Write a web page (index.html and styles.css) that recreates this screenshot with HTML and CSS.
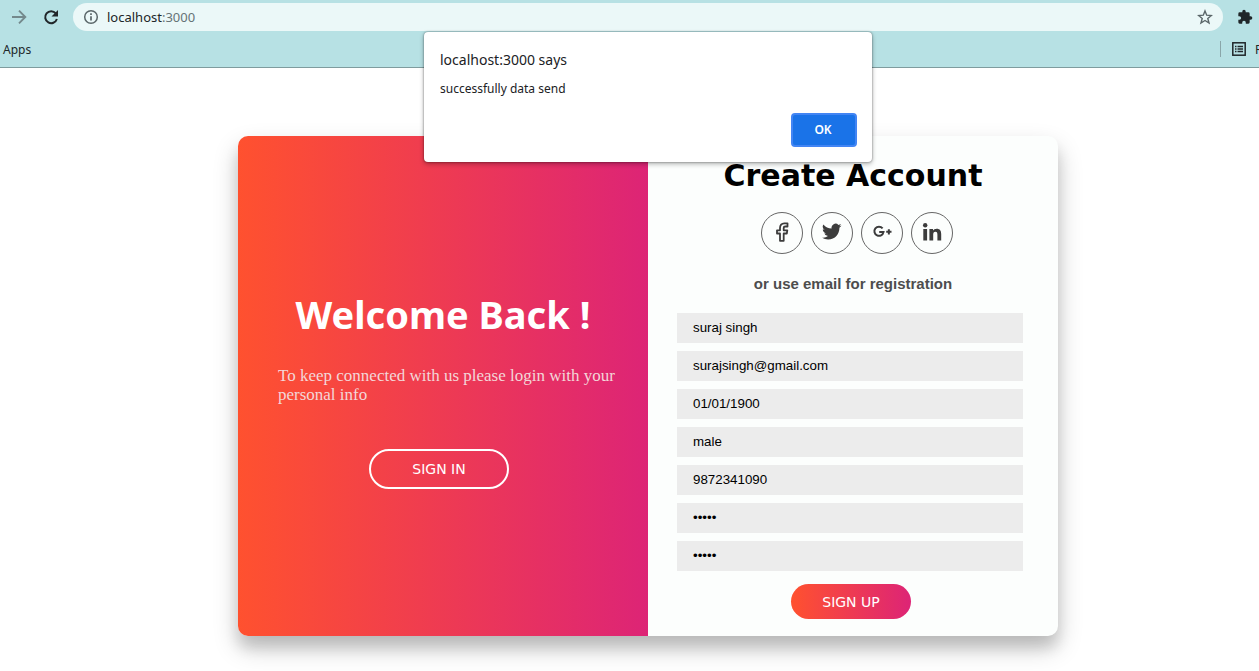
FILE: index.html
```html
<!DOCTYPE html>
<html lang="en">
<head>
<meta charset="utf-8">
<title>Create Account</title>
<link rel="stylesheet" href="styles.css">
</head>
<body>
<header class="chrome">
  <div class="toolbar">
    <button class="tool tool-muted" type="button" aria-label="Forward">
      <svg viewBox="0 0 16 16" width="16" height="16" fill="none" stroke="currentColor" stroke-width="1.9"><path d="M1 8h13M8 1.700l6.300 6.300L8 14.300"/></svg>
    </button>
    <button class="tool" type="button" aria-label="Reload">
      <svg viewBox="0 0 16 16" width="16" height="16"><path d="M12.800 4.300A6 6 0 1 0 13.900 10" fill="none" stroke="currentColor" stroke-width="2"/><path d="M15 1v6.500H8.500z" fill="currentColor"/></svg>
    </button>
    <div class="omnibox">
      <svg viewBox="0 0 16 16" width="16" height="16" fill="none" stroke="#5a6669" stroke-width="1.500"><circle cx="8" cy="8" r="6.300"/><path d="M8 7.200v4.300M8 4.300v1.700" stroke-width="1.700"/></svg>
      <span class="url">localhost<span class="port">:3000</span></span>
      <button class="star" type="button" aria-label="Bookmark this page">
        <svg viewBox="0 0 16 16" width="16" height="16" fill="none" stroke="currentColor" stroke-width="1.400"><path d="M8 1.900l1.700 4.300 4.700.3-3.600 3 1.200 4.500L8 11.500 4 14l1.200-4.500-3.600-3 4.700-.3z"/></svg>
      </button>
    </div>
    <button class="tool" type="button" aria-label="Extensions">
      <svg viewBox="0 0 24 24" width="16" height="16" fill="currentColor"><path d="M20.500 11H19V7a2 2 0 0 0-2-2h-4V3.500a2.500 2.500 0 0 0-5 0V5H4a2 2 0 0 0-2 2v3.800h1.500a2.700 2.700 0 0 1 0 5.400H2V20a2 2 0 0 0 2 2h3.800v-1.500a2.700 2.700 0 0 1 5.400 0V22H17a2 2 0 0 0 2-2v-4h1.500a2.500 2.500 0 0 0 0-5z"/></svg>
    </button>
  </div>
  <nav class="bookmarks" aria-label="Bookmarks">
    <a class="bookmark" href="#">Apps</a>
    <a class="bookmark reading" href="#">
      <svg viewBox="0 0 14 14" width="14" height="14" fill="none" stroke="currentColor" stroke-width="1.500"><rect x=".8" y=".8" width="12.400" height="12.400"/><path d="M3 4.500h1.500M5.500 4.500H11M3 7h1.500M5.500 7H11M3 9.500h1.500M5.500 9.500H11" stroke-width="1.400"/></svg>
      <span>Reading list</span>
    </a>
  </nav>
</header>

<dialog class="alert" open aria-labelledby="alert-title">
  <h2 class="alert-title" id="alert-title">localhost:3000 says</h2>
  <p class="alert-text">successfully data send</p>
  <form class="alert-actions" method="dialog"><button class="alert-ok">OK</button></form>
</dialog>

<main class="page">
  <div class="card">
    <section class="welcome">
      <h1 class="welcome-title">Welcome Back !</h1>
      <p class="welcome-text">To keep connected with us please login with your personal info</p>
      <button class="signin" type="button">SIGN IN</button>
    </section>
    <section class="account">
      <h2 class="account-title">Create Account</h2>
      <div class="socials">
        <a class="social" href="#" aria-label="Facebook">
          <svg viewBox="0 0 20 20" width="20" height="20" fill="none" stroke="currentColor" stroke-width="1.800" stroke-linejoin="round"><path d="M8 18.800V11.500H5V8.300h3V6C8 3 9.500 1.300 12.300 1.300h3.200v3.200h-2.300c-1 0-1.500.5-1.500 1.500v2.300h3.600l-.5 3.200h-3.100v7.300z"/></svg>
        </a>
        <a class="social" href="#" aria-label="Twitter">
          <svg viewBox="2 3 21 19" width="20" height="18" fill="currentColor"><path d="M22.500 5.700a8 8 0 0 1-2.400.7 4.200 4.200 0 0 0 1.800-2.300 8 8 0 0 1-2.600 1 4.200 4.200 0 0 0-7.200 3.800A12 12 0 0 1 3.400 4.500a4.200 4.200 0 0 0 1.300 5.600 4 4 0 0 1-1.900-.5 4.200 4.200 0 0 0 3.400 4.200 4 4 0 0 1-1.900.1 4.200 4.200 0 0 0 3.900 2.900A8.400 8.400 0 0 1 2 18.500a12 12 0 0 0 6.400 1.900c7.800 0 12.200-6.500 11.900-12.500a8.500 8.500 0 0 0 2.200-2.200z"/></svg>
        </a>
        <a class="social" href="#" aria-label="Google Plus">
          <svg viewBox="0 0 20 20" width="20" height="20" fill="none" stroke="currentColor" stroke-width="2"><path d="M10.600 6.400A4.600 4.600 0 1 0 11.500 10.100H7.200M14.200 9.800h5.300M16.850 7.200v5.300"/></svg>
        </a>
        <a class="social" href="#" aria-label="LinkedIn">
          <svg viewBox="0 0 20 20" width="20" height="20" fill="currentColor"><circle cx="3.200" cy="3.200" r="2.200"/><path d="M1.300 7h3.800v11.500H1.300zM7.400 7H11v1.600c.6-1.100 1.900-1.900 3.700-1.900 3.400 0 4.500 2.100 4.500 5.300v6.500h-3.800v-5.800c0-1.700-.3-2.900-2-2.900s-2.200 1.200-2.200 2.800v5.900H7.400z"/></svg>
        </a>
      </div>
      <p class="hint">or use email for registration</p>
      <form class="fields">
        <input class="field" type="text" aria-label="Name" value="suraj singh">
        <input class="field" type="email" aria-label="Email" value="surajsingh@gmail.com">
        <input class="field" type="text" aria-label="Date of birth" value="01/01/1900">
        <input class="field" type="text" aria-label="Gender" value="male">
        <input class="field" type="tel" aria-label="Phone" value="9872341090">
        <input class="field" type="password" aria-label="Password" value="12345">
        <input class="field" type="password" aria-label="Confirm password" value="12345">
        <button class="signup" type="button">SIGN UP</button>
      </form>
    </section>
  </div>
</main>
</body>
</html>
```
FILE: styles.css
```css
* { box-sizing: border-box; }

body {
  margin: 0;
  background: #fff;
  color: #000;
  font-family: "Liberation Sans", sans-serif;
}

h1, h2, p { margin: 0; }
button { font: inherit; cursor: pointer; }
svg { display: block; flex: none; }

/* Browser bars */
.chrome {
  height: 68px;
  overflow: hidden;
  background: #b7e1e4;
  border-bottom: 1px solid #7f9c9e;
  color: #202629;
  font-family: "Noto Sans", sans-serif;
}

.toolbar {
  display: flex;
  align-items: center;
  gap: 14px;
  height: 34px;
  padding: 0 6px 0 11px;
}

.tool, .star {
  display: flex;
  padding: 0;
  border: 0;
  background: none;
  color: #202629;
}
.tool + .tool { margin-left: 2px; }
.toolbar .tool-muted { color: #74898c; }
.star { margin-left: auto; color: #5a6669; }

.omnibox {
  flex: 1;
  display: flex;
  align-items: center;
  gap: 8px;
  height: 28px;
  padding: 0 10px;
  border-radius: 14px;
  background: #ebf8f8;
  font-size: 13px;
}
.port { color: #667376; }

.bookmarks {
  display: flex;
  justify-content: space-between;
  height: 30px;
  align-items: center;
  padding-left: 3px;
}
.bookmark {
  color: inherit;
  font-size: 12px;
  text-decoration: none;
}
.reading {
  display: flex;
  align-items: center;
  gap: 9px;
  width: 39px;
  height: 16px;
  padding-left: 11px;
  border-left: 1px solid #8aa6a9;
  white-space: nowrap;
}

/* Alert */
.alert {
  position: absolute;
  z-index: 1;
  top: 32px;
  left: 37px;
  right: 0;
  width: 448px;
  margin: 0 auto;
  padding: 18px 15px 15px 16px;
  border: 0;
  border-radius: 4px;
  background: #fff;
  color: #202124;
  font-family: "Noto Sans", sans-serif;
  box-shadow: 0 0 2px rgba(0, 0, 0, .5), 0 2px 5px rgba(0, 0, 0, .3);
}
.alert-title {
  font-size: 14px;
  font-weight: 400;
  line-height: 20px;
}
.alert-text {
  margin-top: 9px;
  font-size: 12px;
  line-height: 20px;
}
.alert-actions {
  display: flex;
  justify-content: flex-end;
  margin-top: 14px;
}
.alert-ok {
  width: 66px;
  height: 34px;
  padding: 0 2px 2px 0;
  border: 2px solid #4285f4;
  border-radius: 4px;
  background: #1a73e8;
  color: #fff;
  font-size: 12px;
  font-weight: 600;
}

/* Card */
.page {
  display: flex;
  justify-content: center;
  padding: 68px 0 35px 37px;
}
.card {
  display: grid;
  grid-template-columns: 1fr 1fr;
  width: 820px;
  min-height: 500px;
  border-radius: 10px;
  overflow: hidden;
  background: #fcfefd;
  box-shadow: 0 12px 26px rgba(0, 0, 0, .2), 0 12px 14px rgba(0, 0, 0, .12);
}

.welcome {
  display: flex;
  flex-direction: column;
  align-items: center;
  justify-content: center;
  padding: 4px 8px 0 0;
  background: linear-gradient(to right, #ff512f, #dd2476);
  color: #fff;
}
.welcome-title {
  margin-left: 8px;
  font: 700 38px/52px "Noto Sans", sans-serif;
}
.welcome-text {
  align-self: stretch;
  margin: 26px 0 45px;
  padding-left: 40px;
  color: #f3d6d8;
  font: 17px/19px "Liberation Serif", serif;
}
.signin {
  width: 140px;
  height: 40px;
  border: 2px solid #fff;
  border-radius: 20px;
  background: none;
  color: #fff;
  font: 14px "DejaVu Sans", sans-serif;
}

.account {
  padding: 22px 35px 17px 29px;
  text-align: center;
}
.account-title {
  margin-left: 6px;
  font: 700 30px/36px "DejaVu Sans", sans-serif;
  white-space: nowrap;
}
.socials {
  display: flex;
  justify-content: center;
  gap: 8px;
  margin-top: 18px;
  padding-left: 14px;
}
.social {
  display: flex;
  align-items: center;
  justify-content: center;
  width: 42px;
  height: 42px;
  padding-bottom: 2px;
  border: 1px solid #666;
  border-radius: 50%;
  color: #3c3c3c;
}
.hint {
  margin: 20px 0;
  padding-left: 6px;
  color: #4d4d4d;
  font-size: 15px;
  font-weight: 700;
  line-height: 19px;
}
.fields {
  display: flex;
  flex-direction: column;
  align-items: center;
  gap: 8px;
}
.field {
  width: 100%;
  height: 30px;
  padding: 0 16px 1px;
  border: 0;
  background: #ececec;
  color: #000;
  font-family: "Liberation Sans", sans-serif;
}
.signup {
  width: 120px;
  height: 35px;
  margin: 5px 0 0 2px;
  border: 0;
  border-radius: 18px;
  background: linear-gradient(to right, #ff512f, #dd2476);
  color: #fff;
  font: 14px "DejaVu Sans", sans-serif;
}
```
